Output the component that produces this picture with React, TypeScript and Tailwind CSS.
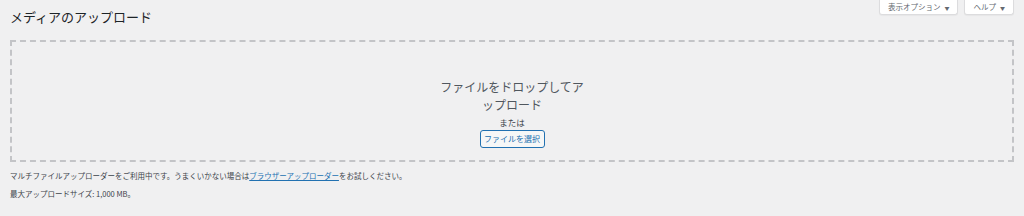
import React from 'react';

const font = "font-['Noto_Sans_CJK_JP','Noto_Sans',sans-serif]";

function MetaButton({ label }: { label: string }) {
    return (
        <button className="h-[15px] px-[8px] bg-white border border-t-0 border-[#dcdcde] rounded-b-[3px] shadow-[0_1px_1px_rgba(0,0,0,0.04)] text-[7.5px] leading-none text-[#646970] flex items-center gap-[4px]">
            <span>{label}</span>
            <span className="text-[5px]">▼</span>
        </button>
    );
}

export default function App() {
    return (
        <main className={`min-h-[216px] bg-[#f0f0f1] px-[10px] ${font}`}>
            <div className="flex items-start justify-between">
                <h1 className="pt-[7px] text-[13px] leading-[20px] font-normal text-[#1d2327]">メディアのアップロード</h1>
                <div className="flex gap-[6px]">
                    <MetaButton label="表示オプション" />
                    <MetaButton label="ヘルプ" />
                </div>
            </div>

            <div className="mt-[13px] h-[122px] border-2 border-dashed border-[#c3c4c7] flex flex-col items-center pt-[36px]">
                <p className="w-[150px] text-center text-[12px] leading-[18px] text-[#50575e]">
                    ファイルをドロップしてアップロード
                </p>
                <p className="mt-[2px] text-[8.5px] leading-[12px] text-[#3c434a]">または</p>
                <button className="mt-[2px] h-[18px] w-[65px] rounded-[3px] border border-[#2271b1] bg-[#f6f7f7] text-[8px] text-[#2271b1] flex items-center justify-center">
                    ファイルを選択
                </button>
            </div>

            <p className="mt-[8px] text-[7.5px] leading-[12px] text-[#3c434a]">
                マルチファイルアップローダーをご利用中です。うまくいかない場合は<a href="#" className="text-[#2271b1] underline">ブラウザーアップローダー</a>をお試しください。
            </p>
            <p className="mt-[6px] text-[7.5px] leading-[12px] text-[#3c434a]">最大アップロードサイズ: 1,000 MB。</p>
        </main>
    );
}
